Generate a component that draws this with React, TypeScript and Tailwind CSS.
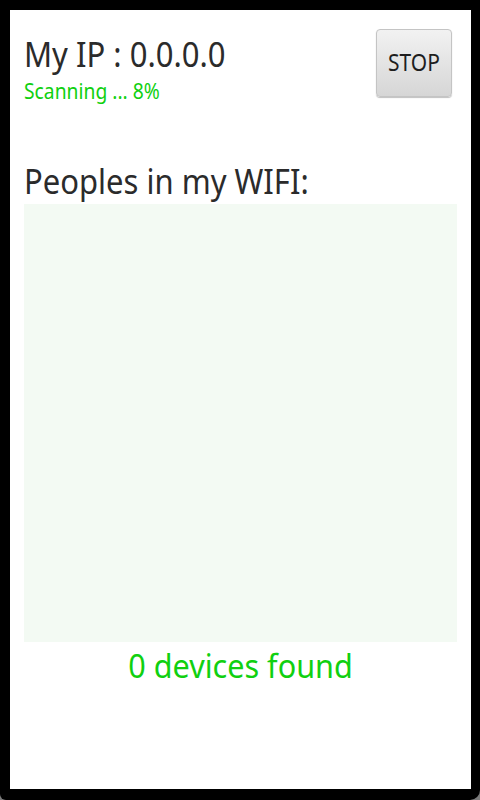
export default function App() {
  return (
    <div className="w-[480px] h-[800px] bg-[#7a7a7a]" style={{ fontFamily: '"Noto Sans", "Open Sans", sans-serif' }}>
      <div className="w-full h-full bg-black rounded-br-[10px] rounded-bl-[6px] pt-[10px] pl-[10px] pr-[9px] pb-[11px]">
        <div className="w-full h-full bg-white flex flex-col px-[14px]">
          <div className="flex justify-between items-start">
            <div className="flex flex-col pt-[25px]">
              <div className="text-[31px] leading-[36px] text-[#2b2b2b] scale-y-[1.14]">My IP : 0.0.0.0</div>
              <div className="mt-[8px] text-[19.3px] leading-[24px] text-[#10d010] scale-y-[1.14]">Scanning ... 8%</div>
            </div>
            <button className="mt-[19px] mr-[5px] w-[76px] h-[68px] rounded-[4px] border border-[#c4c4c4] bg-gradient-to-b from-[#f2f2f2] to-[#d6d6d6] shadow-[0_1px_1px_rgba(0,0,0,0.25)] text-[21px] text-[#1e1e1e] flex items-center justify-center">
              <span className="scale-y-[1.14]">STOP</span>
            </button>
          </div>
          <div className="mt-[60px] text-[31px] leading-[36px] text-[#2b2b2b] scale-y-[1.1]">Peoples in my WIFI:</div>
          <div className="mt-[5px] h-[438px] bg-[#f3faf3]" />
          <div className="mt-[5px] text-[30.6px] leading-[36px] text-[#10d010] text-center scale-y-[1.08]">0 devices found</div>
        </div>
      </div>
    </div>
  );
}
